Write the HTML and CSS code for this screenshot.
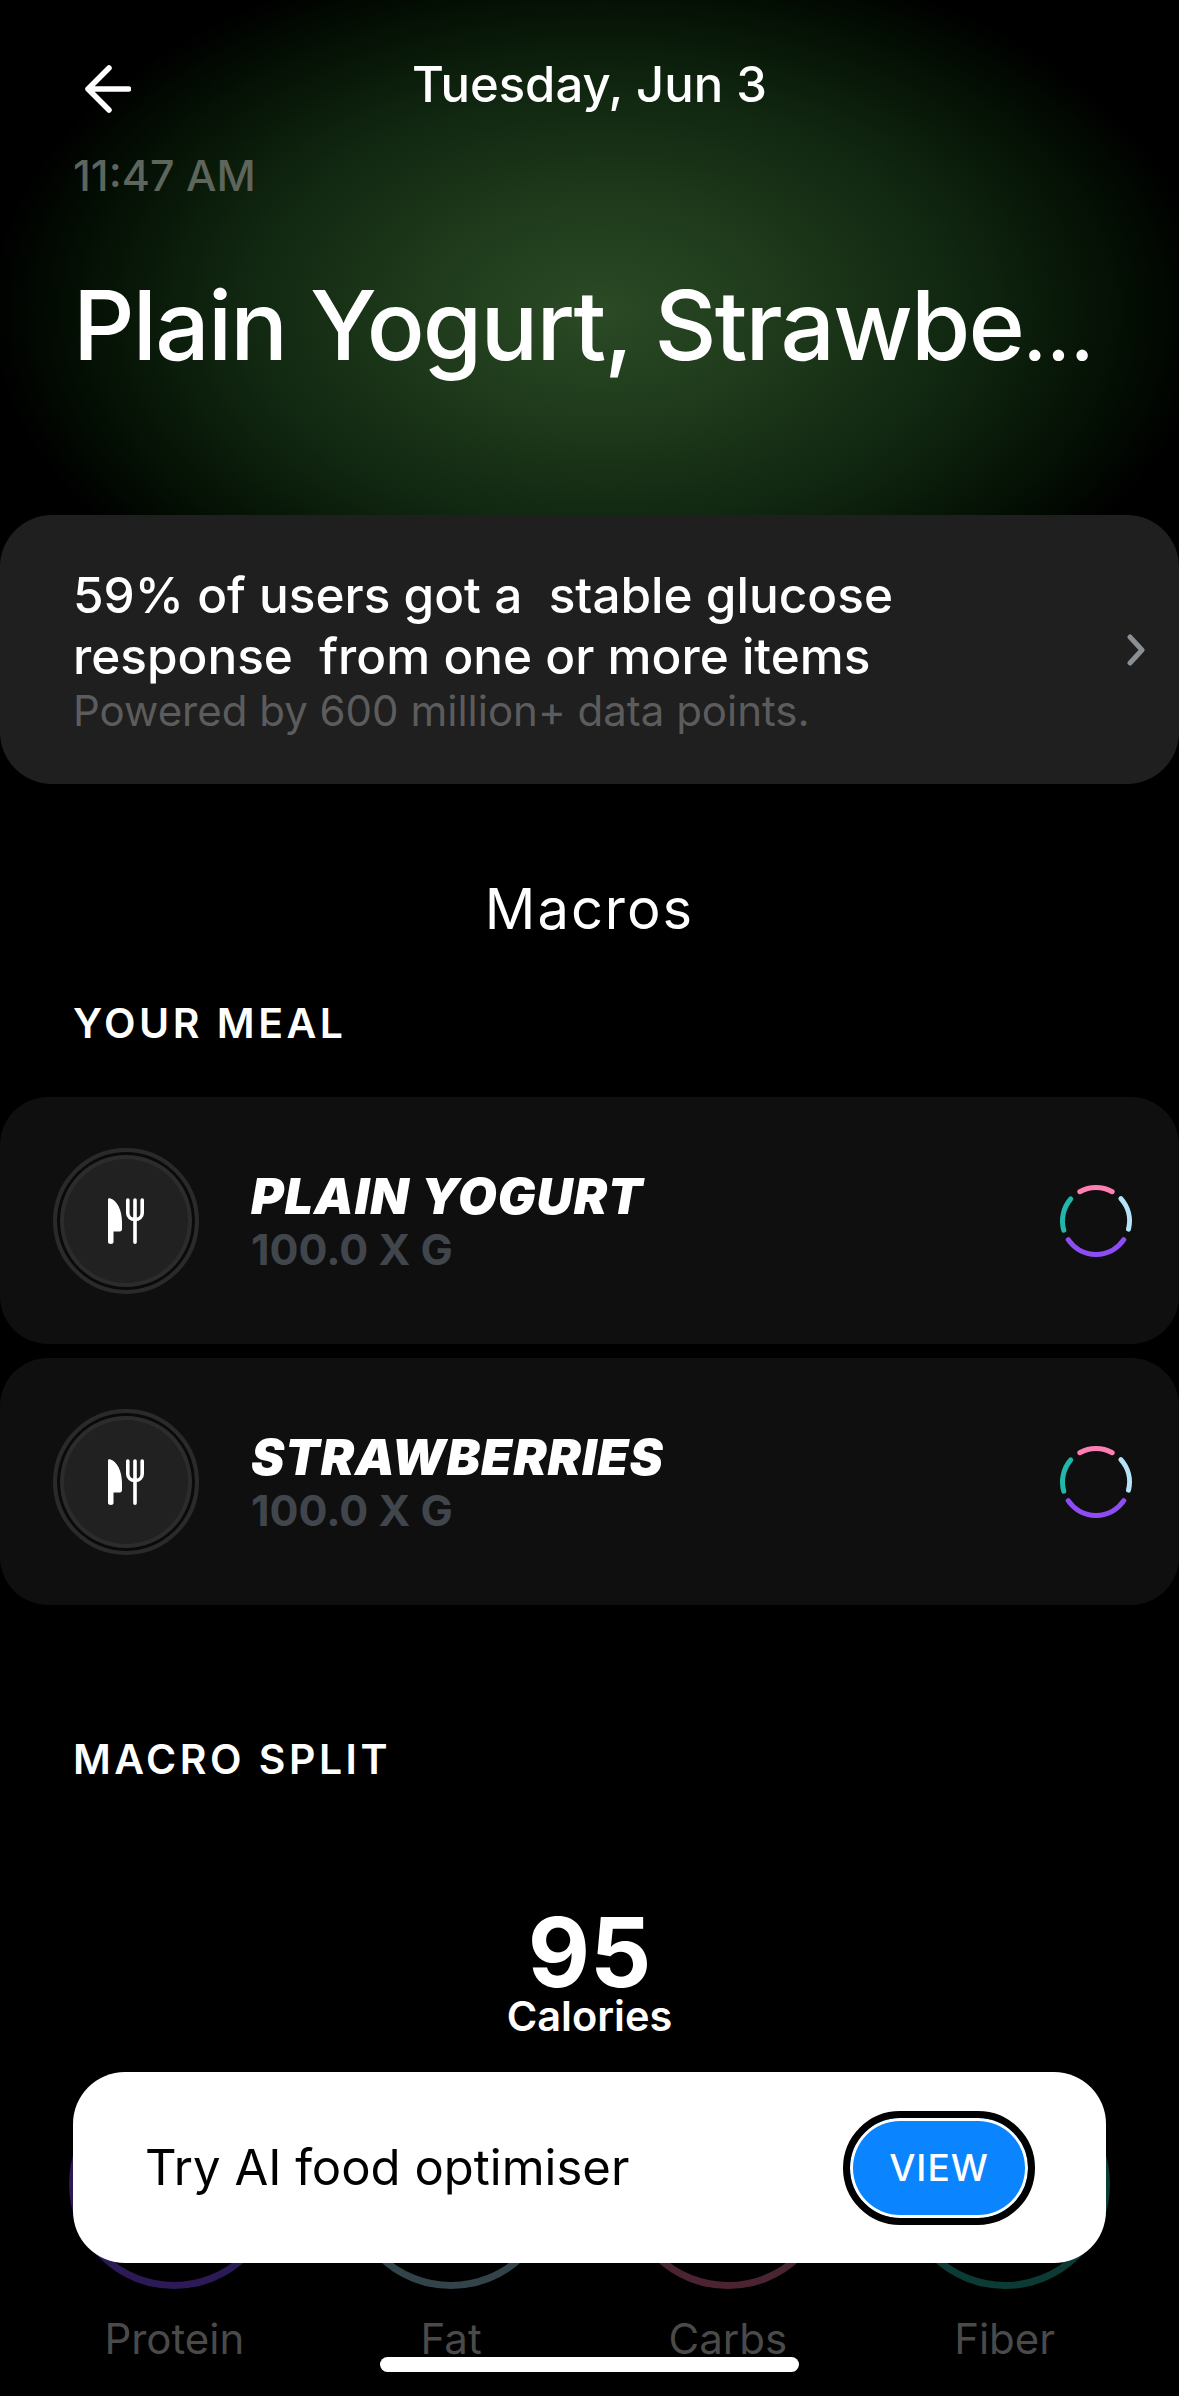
FILE: index.html
```html
<!DOCTYPE html>
<html lang="en">
<head>
  <meta charset="UTF-8" />
  <title>Meal details</title>
  <meta name="viewport" content="width=device-width, initial-scale=1" />
  <link rel="stylesheet" href="styles.css">
</head>
<body>

<svg class="defs" width="0" height="0">
  <symbol id="fork-knife" viewBox="0 0 36 46">
    <path fill="#fff" d="M0 1.5C0 .5.8 0 1.8.2 9 2 14 12 14 24v7c0 1.600-.800 2.500-2 2.500H5.500V44c0 1.300-1 2-2.700 2S0 45.300 0 44z"/>
    <path fill="none" stroke="#fff" stroke-width="3.600" stroke-linecap="round" d="M19.800 2v13c0 4 3 6.500 7.200 6.500s7.200-2.500 7.200-6.500V2M27 2v42.200"/>
  </symbol>
  <symbol id="macro-ring" viewBox="0 0 80 80">
    <g fill="none" stroke-width="5" stroke-linecap="round">
      <path stroke="#ff7eb3" d="M23.800 10.700A33.500 33.500 0 0 1 56.200 10.700"/>
      <path stroke="#b5e3f7" d="M64.900 17.600A33.500 33.500 0 0 1 72.500 48.100"/>
      <path stroke="#8e4cf5" d="M67.800 58.700A33.500 33.500 0 0 1 12.200 58.700"/>
      <path stroke="#1fb8ab" d="M7.800 49.200A33.500 33.500 0 0 1 14.700 18"/>
    </g>
  </symbol>
</svg>

<div class="screen">
  <div class="hero">
    <div class="nav">
      <svg class="back" viewBox="0 0 46 48" fill="none" stroke="#fff" stroke-width="5.500" stroke-linecap="round" stroke-linejoin="round">
        <path d="M43.500 24H3M24 3 3 24l21 21"/>
      </svg>
      <div class="nav-title">Tuesday, Jun 3</div>
    </div>
    <div class="time">11:47 AM</div>
    <h1 class="meal-title">Plain Yogurt, Strawbe<span class="clip">…</span></h1>
  </div>

  <div class="insight">
    <div>
      <div class="insight-text">59% of users got a&nbsp; stable glucose<br>response&nbsp; from one or more items</div>
      <div class="insight-note">Powered by 600 million+ data points.</div>
    </div>
    <svg class="chevron" viewBox="0 0 18 32" fill="none" stroke="#8a8f96" stroke-width="5" stroke-linecap="round" stroke-linejoin="round">
      <path d="M3 3l12 13L3 29"/>
    </svg>
  </div>

  <h2 class="macros-title">Macros</h2>
  <h3 class="section-label meal-label">YOUR MEAL</h3>

  <div class="food-list">
    <div class="food-row">
      <div class="food-icon"><svg class="fork"><use href="#fork-knife"/></svg></div>
      <div class="food-info">
        <div class="food-name">PLAIN YOGURT</div>
        <div class="food-amount">100.0 X G</div>
      </div>
      <svg class="ring"><use href="#macro-ring"/></svg>
    </div>
    <div class="food-row">
      <div class="food-icon"><svg class="fork"><use href="#fork-knife"/></svg></div>
      <div class="food-info">
        <div class="food-name">STRAWBERRIES</div>
        <div class="food-amount">100.0 X G</div>
      </div>
      <svg class="ring"><use href="#macro-ring"/></svg>
    </div>
  </div>

  <h3 class="section-label split-label">MACRO SPLIT</h3>

  <div class="calories">
    <div class="calories-num">95</div>
    <div class="calories-label">Calories</div>
  </div>

  <div class="macro-grid">
    <div class="macro"><div class="macro-ring protein"></div><div class="macro-name">Protein</div></div>
    <div class="macro"><div class="macro-ring fat"></div><div class="macro-name">Fat</div></div>
    <div class="macro"><div class="macro-ring carbs"></div><div class="macro-name">Carbs</div></div>
    <div class="macro"><div class="macro-ring fiber"></div><div class="macro-name">Fiber</div></div>
  </div>

  <div class="banner">
    <div class="banner-text">Try AI food optimiser</div>
    <div class="view-btn">VIEW</div>
  </div>

  <div class="home-bar"></div>
</div>

</body>
</html>
```

FILE: styles.css
```css
* {
  box-sizing: border-box;
}
html, body {
  margin: 0;
  background: #000;
}
body {
  font-family: 'Inter', 'Liberation Sans', sans-serif;
  color: #fff;
}
.defs {
  position: absolute;
}
.screen {
  position: relative;
  width: 1179px;
  height: 2396px;
  overflow: hidden;
  background: radial-gradient(ellipse 610px 370px at 600px 310px, #2b4a25 0%, #1e3a1b 30%, #102610 60%, #041004 85%, #000 100%) no-repeat;
}
.hero {
  height: 515px;
  padding: 57px 0 0 73px;
}
.nav {
  display: grid;
  grid-template-columns: 1fr auto 1fr;
  margin-left: -73px;
  align-items: center;
}
.back {
  width: 46px;
  height: 48px;
  margin: 8px 0 0 85px;
}
.nav-title {
  font-size: 49px;
  font-weight: 500;
  line-height: 50px;
  grid-column: 2;
}
.time {
  margin-top: 37px;
  font-size: 43px;
  font-weight: 500;
  line-height: 50px;
  color: #5d655c;
}
.meal-title {
  margin: 67px 0 0;
  font-size: 96px;
  font-weight: 500;
  line-height: 116px;
  letter-spacing: -1.8px;
  white-space: nowrap;
}
.clip {
  font-size: 78px;
}
.insight {
  display: flex;
  align-items: center;
  justify-content: space-between;
  height: 269px;
  padding: 0 34px 0 73px;
  border-radius: 52px;
  background: #1f1f1f;
}
.insight-text {
  font-size: 49.500px;
  font-weight: 500;
  line-height: 61px;
}
.insight-note {
  font-size: 42px;
  line-height: 48px;
  color: #5c5c5c;
}
.chevron {
  width: 18px;
  height: 32px;
}
.macros-title {
  margin: 94px 0 0;
  height: 62px;
  font-size: 56px;
  font-weight: 400;
  line-height: 62px;
  letter-spacing: 2px;
  text-align: center;
}
.section-label {
  margin: 0;
  padding-left: 73px;
  font-size: 41px;
  font-weight: 600;
  line-height: 46px;
  letter-spacing: 3.500px;
}
.meal-label {
  margin-top: 60px;
}
.food-list {
  display: flex;
  flex-direction: column;
  gap: 14px;
  margin-top: 51px;
}
.food-row {
  display: flex;
  align-items: center;
  height: 247px;
  padding: 0 43px 0 53px;
  border-radius: 48px;
  background: #0f0f10;
}
.food-icon {
  display: flex;
  align-items: center;
  justify-content: center;
  flex: none;
  width: 146px;
  height: 146px;
  border: 4px solid #2a2a2a;
  border-radius: 50%;
  box-shadow: inset 0 0 0 3px #0a0a0a, inset 0 0 0 7px #2c2c2c;
  background: #212121;
}
.fork {
  width: 36px;
  height: 46px;
}
.food-info {
  flex: 1;
  margin-left: 52px;
}
.food-name {
  font-size: 50px;
  font-weight: 900;
  font-style: italic;
  line-height: 56px;
  letter-spacing: 1px;
}
.food-amount {
  font-size: 43px;
  font-weight: 700;
  line-height: 50px;
  color: #40464c;
}
.ring {
  width: 80px;
  height: 80px;
}
.split-label {
  margin-top: 131px;
}
.calories {
  margin-top: 118px;
  text-align: center;
}
.calories-num {
  font-size: 96px;
  font-weight: 700;
  line-height: 104px;
}
.calories-label {
  margin-top: -12px;
  font-size: 41.500px;
  font-weight: 600;
  line-height: 48px;
}
.macro-grid {
  display: grid;
  grid-template-columns: repeat(4, 1fr);
  margin-top: 39px;
  padding: 0 36px;
  text-align: center;
}
.macro-ring {
  width: 210px;
  height: 210px;
  margin: 0 auto;
  border: 7px solid;
  border-radius: 50%;
}
.protein {
  border-color: #2b1a55;
}
.fat {
  border-color: #33434a;
}
.carbs {
  border-color: #4b2434;
}
.fiber {
  border-color: #0c3a34;
}
.macro-name {
  margin-top: 26px;
  font-size: 42px;
  line-height: 48px;
  color: #4a4a4a;
}
.banner {
  position: absolute;
  left: 73px;
  top: 2072px;
  display: flex;
  align-items: center;
  justify-content: space-between;
  width: 1033px;
  height: 191px;
  padding: 0 71px 0 72px;
  border-radius: 52px;
  background: #fff;
  color: #000;
}
.banner-text {
  font-size: 49px;
  font-weight: 400;
}
.view-btn {
  display: flex;
  align-items: center;
  justify-content: center;
  width: 192px;
  height: 114px;
  border: 7px solid #000;
  border-radius: 57px;
  box-shadow: inset 0 0 0 3px #fff;
  background: #0a84ff;
  color: #fff;
  font-size: 37px;
  font-weight: 500;
  letter-spacing: 1px;
}
.home-bar {
  position: absolute;
  left: 380px;
  top: 2357px;
  width: 419px;
  height: 15px;
  border-radius: 8px;
  background: #fff;
}
```
